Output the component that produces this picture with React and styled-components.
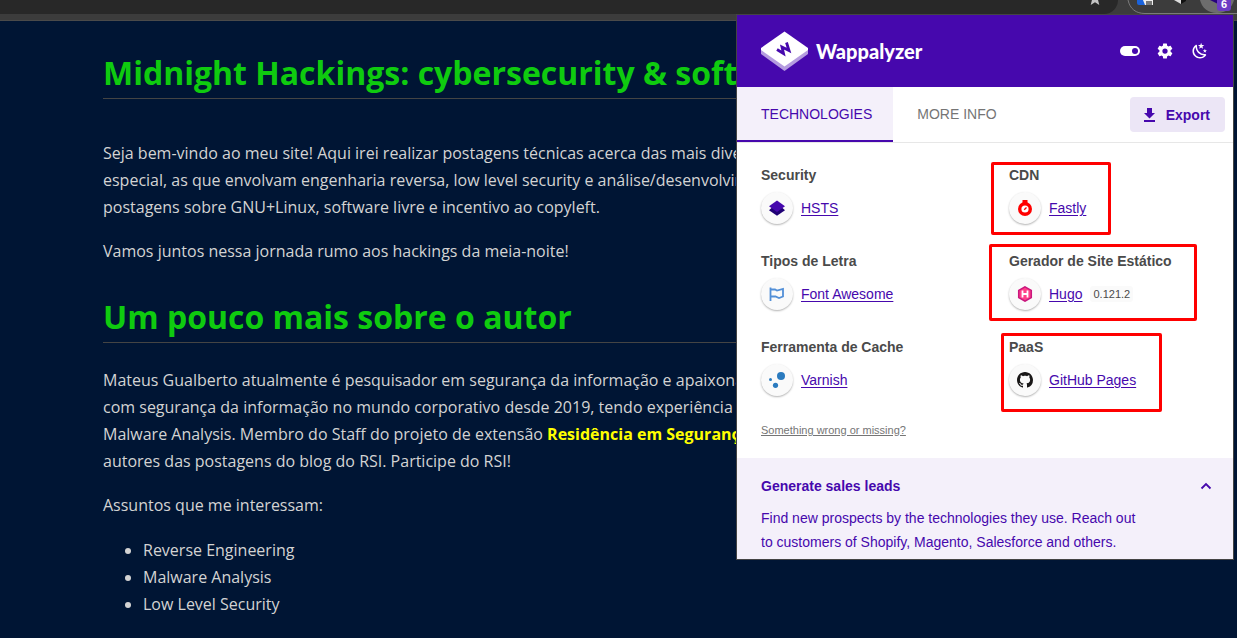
import React from 'react';
import styled, { createGlobalStyle, css } from 'styled-components';

const Global = createGlobalStyle`
  *, *::before, *::after { box-sizing: border-box; }
  body { margin: 0; background: #001534; font-family: "Open Sans", "Noto Sans", sans-serif; }
`;

const Shell = styled.div`
  position: relative;
  min-height: 100vh;
  overflow: hidden;
  background: #001534;
`;

const BrowserBar = styled.header`
  display: flex;
  justify-content: flex-end;
  height: 21px;
  background: #3c3c3c;
  border-bottom: 1px solid #4a4a4a;
`;

const AddressBar = styled.div`
  flex: 1;
  height: 14px;
  display: flex;
  justify-content: flex-end;
  padding-right: 15px;
  background: #282828;
  border-bottom-right-radius: 14px;
`;

const BarIcon = styled.svg`
  display: block;
  flex: none;
`;

const Article = styled.main`
  padding: 30px 103px 0;
  color: #d3d3d3;
  font-size: 16px;
  line-height: 27px;
  white-space: nowrap;
`;

const Title = styled.h1`
  margin: 0 0 41px;
  height: 48px;
  border-bottom: 1px solid #444;
  color: #0fcb0f;
  font-size: 32px;
  line-height: 44px;
  font-weight: 700;
`;

const Subtitle = styled(Title).attrs({ as: 'h2' })`
  margin: 30px 0 24px;
`;

const Para = styled.p`
  margin: 0 0 17px;
`;

const Highlight = styled.strong`
  color: #ff0;
`;

const Topics = styled.ul`
  margin: 18px 0 0;
  padding-left: 40px;
`;

const Popup = styled.aside`
  position: absolute;
  top: 14px;
  right: 3px;
  width: 498px;
  border: 1px solid #444;
  background: #fff;
  color: #4608ad;
  font-family: "Liberation Sans", Arial, sans-serif;
  font-size: 14px;
  line-height: 24px;
`;

const PopupHeader = styled.div`
  display: flex;
  align-items: center;
  height: 72px;
  padding: 0 23px 0 24px;
  background: #4608ad;
  color: #fff;
`;

const Wordmark = styled.span`
  flex: 1;
  padding-left: 8px;
  font: 900 20px/24px Lato, sans-serif;
`;

const Tools = styled.div`
  display: flex;
  gap: 15px;
`;

const IconButton = styled.button`
  display: grid;
  place-items: center;
  width: 20px;
  height: 20px;
  padding: 0;
  border: 0;
  background: none;
  color: inherit;
`;

const Tabs = styled.nav`
  display: flex;
  align-items: center;
  height: 56px;
  padding-right: 8px;
  border-bottom: 1px solid #e7e7e7;
`;

const Tab = styled.button`
  height: 55px;
  padding: 0 21px 0 24px;
  border: 0;
  border-bottom: 2px solid ${p => (p.$active ? '#4608ad' : 'transparent')};
  background: ${p => (p.$active ? '#f4f0fa' : 'none')};
  color: ${p => (p.$active ? '#4608ad' : '#757575')};
  font: 14px/24px "Liberation Sans", Arial, sans-serif;
`;

const ExportButton = styled.button`
  display: flex;
  align-items: center;
  gap: 8px;
  height: 35px;
  margin-left: auto;
  padding: 0 15px 0 11px;
  border: 0;
  border-radius: 4px;
  background: #ece6f6;
  color: #4608ad;
  font: 700 14px/24px "Liberation Sans", Arial, sans-serif;
`;

const Categories = styled.div`
  display: grid;
  grid-template-columns: 1fr 1fr;
  row-gap: 25px;
  padding-top: 20px;
`;

const Category = styled.section`
  position: relative;
  padding-left: 24px;
  ${p => p.$box && css`
    &::after {
      content: "";
      position: absolute;
      top: ${p.$box.top}px;
      left: ${p.$box.left}px;
      width: ${p.$box.width}px;
      height: ${p.$box.height}px;
      border: 3px solid #f00;
      border-radius: 2px;
      pointer-events: none;
    }
  `}
`;

const CategoryName = styled.h3`
  margin: 0 0 5px;
  color: #4a4a4a;
  font-size: 14px;
  line-height: 24px;
  font-weight: 700;
`;

const Technology = styled.div`
  display: flex;
  align-items: center;
  gap: 8px;
`;

const Badge = styled.span`
  display: grid;
  place-items: center;
  width: 32px;
  height: 32px;
  border-radius: 50%;
  background: #fafafa;
  box-shadow: 0 1px 2px rgba(0, 0, 0, 0.3);
`;

const TechLink = styled.a`
  color: #4608ad;
  text-underline-offset: 2px;
`;

const Version = styled.span`
  padding: 0 3px;
  border-radius: 3px;
  background: #fafafa;
  color: #4a4a4a;
  font-size: 11px;
  line-height: 16px;
`;

const Feedback = styled.a`
  display: block;
  width: max-content;
  margin: 25px 24px 19px;
  color: #757575;
  font-size: 11px;
  line-height: 18px;
`;

const Leads = styled.section`
  padding: 16px 21px 5px 24px;
  background: #f4f0fa;
`;

const LeadsHead = styled.button`
  display: flex;
  align-items: center;
  justify-content: space-between;
  width: 100%;
  padding: 0;
  border: 0;
  background: none;
  color: inherit;
  font: 700 14px/24px "Liberation Sans", Arial, sans-serif;
`;

const LeadsText = styled.p`
  max-width: 386px;
  margin: 8px 0 0;
`;

const StarIcon = () => (
  <BarIcon width="16" height="14" viewBox="0 0 16 14">
    <path d="M8 -9l2 5 5 .4-4 3.400 1.300 5.200L8 2.300 3.700 5l1.300-5.200" fill="#c4c4c4" />
  </BarIcon>
);

const ExtensionStrip = () => (
  <BarIcon width="119" height="20" viewBox="0 0 119 20">
    <path d="M10 0C12 9 18 13.500 27 13.500H119" fill="none" stroke="#7b7b7b" />
    <path d="M19 0h9l4 5H21q-2 0-2-2z" fill="#1a63dc" />
    <path d="M25 0h10v5h-8z" fill="#eee" />
    <path d="M28 1h6v4h-6z" fill="#777" />
    <path d="M56 0l7 4V0z" fill="#ddd" />
    <path d="M63 0v4l5-3V0z" fill="#111" />
    <path d="M82 0c2 8 8 13 17 13s15-5 17-13z" fill="#6d6d6d" />
    <path d="M92 0l8 4V0z" fill="#27027c" />
    <rect x="99" y="-4" width="14" height="15" rx="3" fill="#6c3cc4" />
    <text x="106" y="8" textAnchor="middle" fill="#fff" fontFamily="Liberation Sans, sans-serif" fontSize="11" fontWeight="700">6</text>
  </BarIcon>
);

const Logo = () => (
  <svg width="47" height="40" viewBox="0 0 47 40">
    <path d="M0 18v5l23.500 17L47 23v-5z" fill="#b59ce0" />
    <path d="M23.500 0.500L47 17v2L23.500 35.500 0 19v-2z" fill="#fff" />
    <path d="M16 18.500l6.500 4-1.500-6.500 7 3.500-2.500-8" fill="none" stroke="#4608ad" strokeWidth="2.800" />
  </svg>
);

const ToggleIcon = () => (
  <svg width="20" height="20" viewBox="0 0 20 20">
    <rect y="5" width="20" height="10" rx="5" fill="#fff" />
    <circle cx="15" cy="10" r="3" fill="#4608ad" />
  </svg>
);

const GearIcon = () => (
  <svg width="18" height="18" viewBox="0 0 24 24" fill="currentColor">
    <path d="M12 15.500A3.500 3.500 0 0 1 8.500 12 3.500 3.500 0 0 1 12 8.500a3.500 3.500 0 0 1 3.500 3.500 3.500 3.500 0 0 1-3.500 3.500m7.430-2.530c.04-.32.07-.64.07-.97s-.03-.66-.07-1l2.110-1.630c.19-.15.24-.42.12-.64l-2-3.460c-.12-.22-.39-.31-.61-.22l-2.490 1c-.52-.39-1.060-.73-1.690-.98l-.37-2.650A.506.506 0 0 0 14 2h-4c-.25 0-.46.18-.5.42l-.37 2.650c-.63.25-1.170.59-1.690.98l-2.490-1c-.22-.09-.49 0-.61.22l-2 3.460c-.13.22-.07.49.12.64L4.570 11c-.04.34-.07.67-.07 1s.03.65.07.97l-2.110 1.660c-.19.15-.25.42-.12.64l2 3.460c.12.22.39.3.61.22l2.490-1.010c.52.4 1.060.74 1.690.99l.37 2.650c.04.24.25.42.5.42h4c.25 0 .46-.18.5-.42l.37-2.650c.63-.26 1.170-.59 1.690-.99l2.490 1.010c.22.08.49 0 .61-.22l2-3.460c.12-.22.07-.49-.12-.64z" />
  </svg>
);

const NightIcon = () => (
  <svg width="18" height="18" viewBox="0 0 24 24" fill="currentColor">
    <path d="m17.750 4.090-2.530 1.940.91 3.060-2.630-1.810-2.630 1.810.91-3.060-2.530-1.940L12.440 4l1.060-3 1.060 3zm3.500 6.910-1.640 1.250.59 1.980-1.700-1.170-1.700 1.170.59-1.980L15.750 11l2.060-.05L18.500 9l.69 1.950zm-2.280 4.950c.83-.08 1.720 1.100 1.190 1.850-.32.45-.66.87-1.080 1.270C15.170 23 8.840 23 4.940 19.070c-3.910-3.900-3.910-10.240 0-14.140.4-.4.82-.76 1.270-1.080.75-.53 1.930.36 1.850 1.190-.27 2.860.69 5.830 2.890 8.020a9.960 9.960 0 0 0 8.020 2.890m-1.640 2.020a12.080 12.080 0 0 1-7.800-3.470c-2.170-2.190-3.330-5-3.490-7.820-2.810 3.140-2.700 7.960.31 10.980 3.020 3.010 7.840 3.120 10.980.31" />
  </svg>
);

const DownloadIcon = () => (
  <svg width="17" height="18" viewBox="0 0 17 18" fill="currentColor">
    <path d="M6 2h5v5h3l-5.500 5.500L3 7h3zM3 14h11v2H3z" />
  </svg>
);

const ChevronIcon = () => (
  <svg width="12" height="12" viewBox="0 0 12 12">
    <path d="M1.500 8.500L6 4l4.500 4.500" fill="none" stroke="currentColor" strokeWidth="1.800" />
  </svg>
);

const HstsIcon = () => (
  <svg width="16" height="16" viewBox="0 0 16 16">
    <path d="M0 10.200L2.500 8h11l2.500 2.200-8 5.600z" fill="#1f0075" />
    <path d="M8 .5l8 5.800L8 12 0 6.300z" fill="#4608ad" />
  </svg>
);

const FlagIcon = () => (
  <svg width="16" height="16" viewBox="0 0 16 16">
    <path d="M1.500 1.500V15M1.500 3.500h4.500l2 1 6-1.500v7.500L10 12l-3.500-1.500h-5" fill="none" stroke="#528fd7" strokeWidth="1.800" />
  </svg>
);

const VarnishIcon = () => (
  <svg width="16" height="16" viewBox="0 0 16 16" fill="#2b7bbf">
    <circle cx="12" cy="4" r="4" />
    <circle cx="1.500" cy="7.500" r="1.500" />
    <circle cx="6.500" cy="13.300" r="2.600" />
  </svg>
);

const FastlyIcon = () => (
  <svg width="16" height="16" viewBox="0 0 16 16">
    <path d="M5.500 0h5v3h-5z" fill="#f00" />
    <circle cx="8" cy="9" r="7" fill="#f00" />
    <circle cx="8" cy="9" r="3.600" fill="#fff" />
    <path d="M7.200 9.800l2.300-2.300" stroke="#f00" strokeWidth="1.300" />
  </svg>
);

const HugoIcon = () => (
  <svg width="16" height="16" viewBox="0 0 16 16">
    <path d="M8 .8l6.300 3.600v7.200L8 15.200l-6.300-3.600V4.400z" fill="#ff4088" stroke="#c9177e" strokeWidth="1.500" />
    <path d="M5.500 4.500v7M10.500 4.500v7M5.500 8h5" stroke="#fff" strokeWidth="1.800" />
  </svg>
);

const GithubIcon = () => (
  <svg width="16" height="16" viewBox="0 0 16 16">
    <path fill="#191717" d="M8 0C3.580 0 0 3.580 0 8c0 3.540 2.290 6.530 5.470 7.590.4.07.55-.17.55-.38 0-.19-.01-.82-.01-1.490-2.010.37-2.530-.49-2.690-.94-.09-.23-.48-.94-.82-1.130-.28-.15-.68-.52-.01-.53.63-.01 1.080.58 1.230.82.72 1.210 1.870.87 2.330.66.07-.52.28-.87.51-1.070-1.780-.2-3.640-.89-3.640-3.950 0-.87.31-1.590.82-2.150-.08-.2-.36-1.020.08-2.120 0 0 .67-.21 2.200.82.64-.18 1.320-.27 2-.27s1.360.09 2 .27c1.530-1.040 2.200-.82 2.200-.82.44 1.100.16 1.920.08 2.120.51.56.82 1.270.82 2.150 0 3.070-1.870 3.750-3.650 3.950.29.25.54.73.54 1.480 0 1.070-.01 1.930-.01 2.200 0 .21.15.46.55.38A8.010 8.010 0 0 0 16 8c0-4.420-3.580-8-8-8z" />
  </svg>
);

const categories = [
  { name: 'Security', tech: 'HSTS', icon: <HstsIcon /> },
  { name: 'CDN', tech: 'Fastly', icon: <FastlyIcon />, box: { top: -1, left: 6, width: 120, height: 73 } },
  { name: 'Tipos de Letra', tech: 'Font Awesome', icon: <FlagIcon /> },
  { name: 'Gerador de Site Estático', tech: 'Hugo', version: '0.121.2', icon: <HugoIcon />, box: { top: -5, left: 4, width: 208, height: 77 } },
  { name: 'Ferramenta de Cache', tech: 'Varnish', icon: <VarnishIcon /> },
  { name: 'PaaS', tech: 'GitHub Pages', icon: <GithubIcon />, box: { top: -2, left: 16, width: 161, height: 79 } },
];

export default function App() {
  return (
    <Shell>
      <Global />
      <BrowserBar>
        <AddressBar><StarIcon /></AddressBar>
        <ExtensionStrip />
      </BrowserBar>

      <Article>
        <Title>Midnight Hackings: cybersecurity &amp; software</Title>
        <Para>
          Seja bem-vindo ao meu site! Aqui irei realizar postagens técnicas acerca das mais diversas<br />
          especial, as que envolvam engenharia reversa, low level security e análise/desenvolvimento<br />
          postagens sobre GNU+Linux, software livre e incentivo ao copyleft.
        </Para>
        <Para>Vamos juntos nessa jornada rumo aos hackings da meia-noite!</Para>
        <Subtitle>Um pouco mais sobre o autor</Subtitle>
        <Para>
          Mateus Gualberto atualmente é pesquisador em segurança da informação e apaixonado<br />
          com segurança da informação no mundo corporativo desde 2019, tendo experiência<br />
          Malware Analysis. Membro do Staff do projeto de extensão <Highlight>Residência em Segurança</Highlight><br />
          autores das postagens do blog do RSI. Participe do RSI!
        </Para>
        <Para>Assuntos que me interessam:</Para>
        <Topics>
          <li>Reverse Engineering</li>
          <li>Malware Analysis</li>
          <li>Low Level Security</li>
        </Topics>
      </Article>

      <Popup>
        <PopupHeader>
          <Logo />
          <Wordmark>Wappalyzer</Wordmark>
          <Tools>
            <IconButton aria-label="Toggle"><ToggleIcon /></IconButton>
            <IconButton aria-label="Settings"><GearIcon /></IconButton>
            <IconButton aria-label="Dark mode"><NightIcon /></IconButton>
          </Tools>
        </PopupHeader>
        <Tabs>
          <Tab $active>TECHNOLOGIES</Tab>
          <Tab>MORE INFO</Tab>
          <ExportButton><DownloadIcon />Export</ExportButton>
        </Tabs>
        <Categories>
          {categories.map(c => (
            <Category key={c.name} $box={c.box}>
              <CategoryName>{c.name}</CategoryName>
              <Technology>
                <Badge>{c.icon}</Badge>
                <TechLink href="#">{c.tech}</TechLink>
                {c.version && <Version>{c.version}</Version>}
              </Technology>
            </Category>
          ))}
        </Categories>
        <Feedback href="#">Something wrong or missing?</Feedback>
        <Leads>
          <LeadsHead>Generate sales leads<ChevronIcon /></LeadsHead>
          <LeadsText>
            Find new prospects by the technologies they use. Reach out to customers of Shopify, Magento, Salesforce and others.
          </LeadsText>
        </Leads>
      </Popup>
    </Shell>
  );
}
